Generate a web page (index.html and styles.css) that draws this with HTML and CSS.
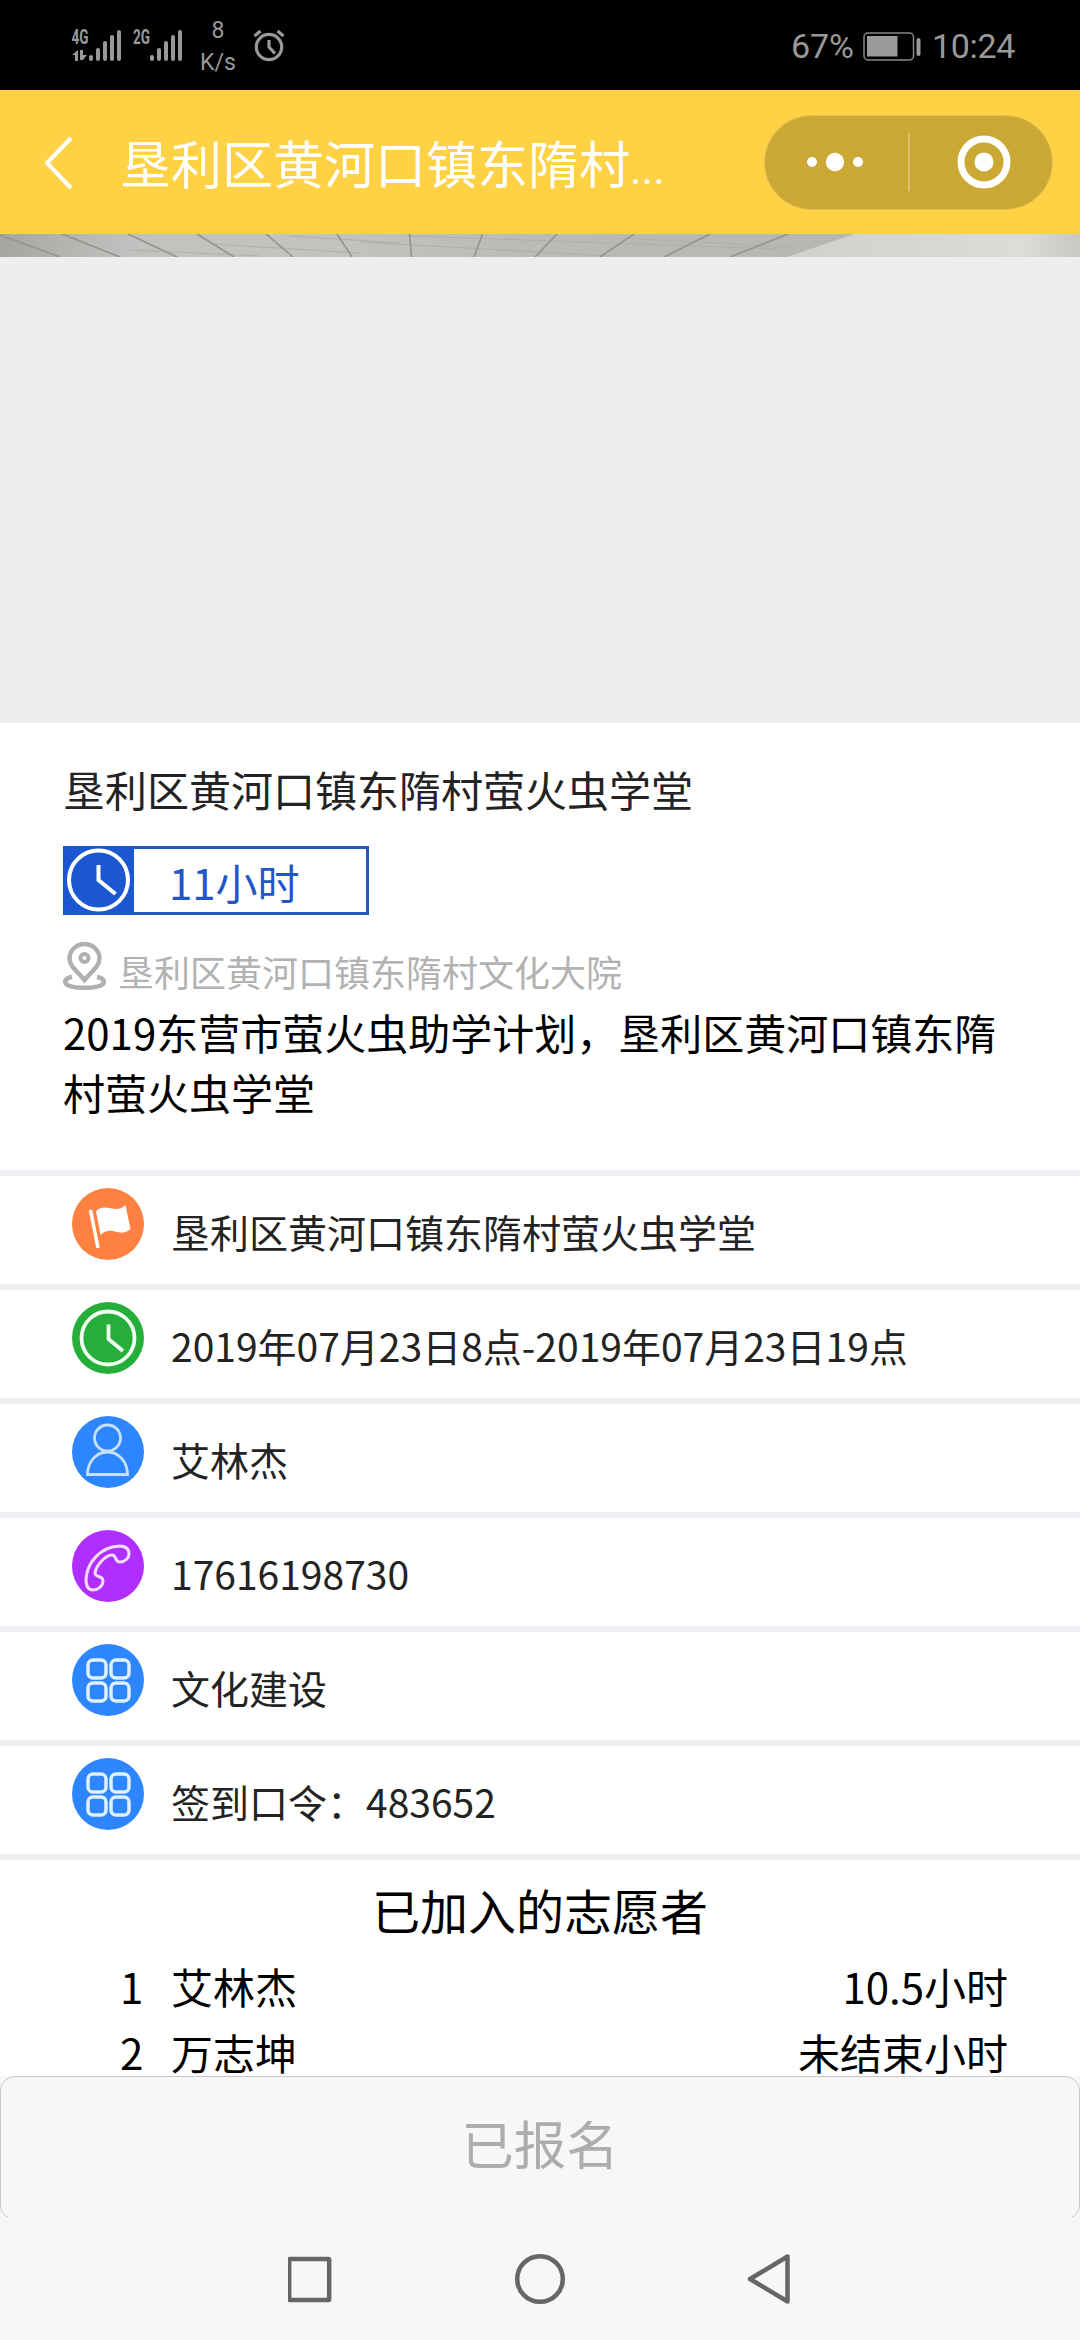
FILE: index.html
```html
<!DOCTYPE html>
<html lang="zh-CN">
  <head>
    <meta charset="UTF-8">
    <title>垦利区黄河口镇东隋村萤火虫学堂</title>
    <link rel="stylesheet" href="styles.css">
  </head>
  <body>
    <div class="status-bar">
      <svg class="signals" width="114" height="40" viewBox="70 23 114 40" fill="#999">
        <text class="net" x="71.500" y="44" textLength="17" lengthAdjust="spacingAndGlyphs">4G</text>
        <text class="net" x="133" y="44" textLength="17" lengthAdjust="spacingAndGlyphs">2G</text>
        <path d="M72 55l6-5v11h-3v-6zM80 50h3v5h4l-4 5h-3z"/>
        <rect x="89" y="55" width="4" height="6" rx="2"/>
        <rect x="96" y="48" width="4" height="13" rx="2"/>
        <rect x="103" y="41" width="4" height="20" rx="2"/>
        <rect x="110" y="35" width="4" height="26" rx="2"/>
        <rect x="117" y="30" width="4" height="31" rx="2"/>
        <rect x="150" y="55" width="4" height="6" rx="2"/>
        <rect x="157" y="48" width="4" height="13" rx="2"/>
        <rect x="164" y="41" width="4" height="20" rx="2"/>
        <rect x="171" y="35" width="4" height="26" rx="2"/>
        <rect x="178" y="30" width="4" height="31" rx="2"/>
      </svg>
      <div class="speed"><span>8</span><span>K/s</span></div>
      <svg class="alarm" width="32" height="34" viewBox="253 29 32 34" fill="none" stroke="#999" stroke-width="3.200">
        <circle cx="269" cy="47" r="12.700"/>
        <path d="M269 40v7l6 6.500M254.500 36l6-5M283.500 36l-6-5"/>
      </svg>
      <span class="percent">67%</span>
      <svg class="battery" width="60" height="30" viewBox="0 0 60 30">
        <rect x="1" y="1" width="49.500" height="27" rx="4" fill="none" stroke="#888" stroke-width="1.500"/>
        <rect x="4" y="4" width="30.500" height="20.500" fill="#999"/>
        <rect x="53.500" y="6" width="4" height="18" rx="2" fill="#999"/>
      </svg>
      <span class="time">10:24</span>
    </div>

    <div class="nav-bar">
      <svg class="back" width="30" height="54" viewBox="0 0 30 54" fill="none" stroke="#fff" stroke-width="4" stroke-linejoin="round">
        <path d="M27 2L3 27l24 25"/>
      </svg>
      <div class="nav-title">垦利区黄河口镇东隋村<span class="dots">...</span></div>
      <div class="capsule">
        <svg class="more" width="58" height="20" viewBox="0 0 58 20" fill="#fff">
          <circle cx="6" cy="10" r="5"/>
          <circle cx="29" cy="10" r="9.200"/>
          <circle cx="52" cy="10" r="5"/>
        </svg>
        <div class="capsule-line"></div>
        <svg class="target" width="54" height="54" viewBox="0 0 54 54">
          <circle cx="27" cy="27" r="23" fill="none" stroke="#fff" stroke-width="7"/>
          <circle cx="27" cy="27" r="9.500" fill="#fff"/>
        </svg>
      </div>
    </div>

    <svg class="banner" width="1080" height="23" viewBox="0 0 1080 23">
      <defs>
        <linearGradient id="ceiling">
          <stop offset="0" stop-color="#a4a6a2"/>
          <stop offset="0.120" stop-color="#bfc2be"/>
          <stop offset="0.300" stop-color="#c2c4bf"/>
          <stop offset="0.500" stop-color="#b9bbb5"/>
          <stop offset="0.800" stop-color="#b6b7b1"/>
        </linearGradient>
        <linearGradient id="wall">
          <stop offset="0" stop-color="#cfd1cb"/>
          <stop offset="0.800" stop-color="#dcdcd8"/>
          <stop offset="1" stop-color="#c8c7c4"/>
        </linearGradient>
      </defs>
      <rect width="1080" height="23" fill="url(#ceiling)"/>
      <path d="M130 16l130 6M210 10l150 9M290 2l110 7M360 8l250 14M410 2l370 13M620 4l170 9" fill="none" stroke="#aeb0aa"/>
      <path d="M0 1l60 22M62 0l58 23M128 0l49 23M197 0l37 23M266 0l27 23M337 0l15 23M409.500 0l2 23M482.500 0l-8.500 23M557 0l-22 23M634 0l-34 23M710 0l-46 23M788 0l-58 23" fill="none" stroke="#92948f" stroke-width="1.600"/>
      <path d="M854 0h226v23H787z" fill="url(#wall)"/>
    </svg>
    <div class="banner-blank"></div>

    <div class="intro">
      <div class="title">垦利区黄河口镇东隋村萤火虫学堂</div>
      <div class="hours">
        <svg width="71" height="69" viewBox="0 0 71 69" fill="none" stroke="#fff">
          <rect width="71" height="69" fill="#1b57d0" stroke="none"/>
          <circle cx="35.500" cy="34" r="29.500" stroke-width="4"/>
          <path d="M35.500 19v15l17 14" stroke-width="4"/>
        </svg>
        <span>11小时</span>
      </div>
      <div class="address">
        <svg width="43" height="48" viewBox="0 0 43 48" fill="none" stroke="#b0b0b0" stroke-width="4.500">
          <path d="M21.500 38C14 29 6.500 24 6.500 16.500a15 14.500 0 0 1 30 0C36.500 24 29 29 21.500 38z"/>
          <circle cx="21.500" cy="16" r="4" stroke-width="4"/>
          <path d="M9 35C3 36 1 39 3 42c5 5 32 5 37 0 2-3 0-6-6-7"/>
        </svg>
        <span>垦利区黄河口镇东隋村文化大院</span>
      </div>
      <div class="desc">2019东营市萤火虫助学计划，垦利区黄河口镇东隋村萤火虫学堂</div>
    </div>

    <div class="row">
      <svg class="icon" viewBox="0 0 72 72">
        <circle cx="36" cy="36" r="36" fill="#ff8142"/>
        <path d="M18.500 22l7.500 38" stroke="#fff" stroke-width="3.500"/>
        <path d="M24 23c10-9 19 4 29.500-6l5 24c-11 10-19-5-30 6z" fill="#fff"/>
      </svg>
      <span>垦利区黄河口镇东隋村萤火虫学堂</span>
    </div>
    <div class="row">
      <svg class="icon" viewBox="0 0 72 72" fill="none" stroke="#f0fff0" stroke-width="3.800">
        <circle cx="36" cy="36" r="36" fill="#25ae3a" stroke="none"/>
        <circle cx="36" cy="36" r="26.500"/>
        <path d="M36.500 22.500V37L51 49"/>
      </svg>
      <span>2019年07月23日8点-2019年07月23日19点</span>
    </div>
    <div class="row">
      <svg class="icon" viewBox="0 0 72 72" fill="none" stroke="#c4e2ff" stroke-width="2.800">
        <circle cx="36" cy="36" r="36" fill="#2e86ff" stroke="none"/>
        <circle cx="35.500" cy="22" r="13"/>
        <path d="M15.500 58.500C15.500 46 24 36 35.500 36s20 10 20 22.500z"/>
      </svg>
      <span>艾林杰</span>
    </div>
    <div class="row">
      <svg class="icon" viewBox="0 0 72 72" fill="none" stroke="#f4dcff" stroke-width="3">
        <circle cx="36" cy="36" r="36" fill="#b02eff" stroke="none"/>
        <path d="M14 49C15 33 28 17 47 16c7 0 10 3 10 8 0 4-4 8-9 8-6 0-3-7-8-7-6 0-16 10-17 18 0 5 8 2 8 8 0 5-5 9-10 9s-7-5-7-11z"/>
      </svg>
      <span>17616198730</span>
    </div>
    <div class="row">
      <svg class="icon" viewBox="0 0 72 72" fill="none" stroke="#dff0ff" stroke-width="3.500">
        <circle cx="36" cy="36" r="36" fill="#2e86ff" stroke="none"/>
        <rect x="16" y="16" width="18" height="18" rx="5"/>
        <rect x="39" y="16" width="18" height="18" rx="5"/>
        <rect x="16" y="39" width="18" height="18" rx="5"/>
        <rect x="39" y="39" width="18" height="18" rx="5"/>
      </svg>
      <span>文化建设</span>
    </div>
    <div class="row">
      <svg class="icon" viewBox="0 0 72 72" fill="none" stroke="#dff0ff" stroke-width="3.500">
        <circle cx="36" cy="36" r="36" fill="#2e86ff" stroke="none"/>
        <rect x="16" y="16" width="18" height="18" rx="5"/>
        <rect x="39" y="16" width="18" height="18" rx="5"/>
        <rect x="16" y="39" width="18" height="18" rx="5"/>
        <rect x="39" y="39" width="18" height="18" rx="5"/>
      </svg>
      <span>签到口令：483652</span>
    </div>

    <div class="members">
      <div class="members-title">已加入的志愿者</div>
      <div class="member"><span class="num">1</span><span>艾林杰</span><span class="worked">10.5小时</span></div>
      <div class="member"><span class="num">2</span><span>万志坤</span><span class="worked">未结束小时</span></div>
    </div>

    <div class="footer">
      <button class="join-btn" disabled>已报名</button>
    </div>
    <div class="system-nav">
      <svg width="504" height="52" viewBox="288 2253 504 52" fill="none" stroke="#666" stroke-width="4.500" stroke-linejoin="round">
        <rect x="289.200" y="2259" width="40" height="41" rx="1"/>
        <circle cx="540" cy="2279" r="22.800"/>
        <path d="M787.500 2256.500v45L750 2279z"/>
      </svg>
    </div>
  </body>
</html>
```

FILE: styles.css
```css
* {
  box-sizing: border-box;
}
body {
  margin: 0;
  width: 1080px;
  height: 2340px;
  overflow: hidden;
  display: flex;
  flex-direction: column;
  background: #fff;
  color: #000;
  font-family: "Noto Sans CJK SC", sans-serif;
  font-size: 42px;
}
body > * {
  flex-shrink: 0;
}
svg {
  display: block;
  flex-shrink: 0;
}

/* status bar */
.status-bar {
  display: flex;
  height: 90px;
  padding-left: 70px;
  background: #000;
  color: #999;
  font-family: Roboto, sans-serif;
}
.signals {
  margin-top: 23px;
  overflow: visible;
}
.net {
  font: bold 19.5px Roboto, sans-serif;
}
.speed {
  display: flex;
  flex-direction: column;
  align-items: center;
  width: 36px;
  margin: 15px 0 0 16px;
  font-size: 23px;
  line-height: 32px;
}
.alarm {
  margin: 29px 0 0 17px;
}
.percent,
.time {
  font-size: 34px;
  line-height: 93px;
}
.percent {
  margin-left: auto;
}
.battery {
  margin: 32px 0 0 9px;
}
.time {
  width: 148px;
  margin-left: 9px;
  letter-spacing: -0.3px;
}

/* mini program header */
.nav-bar {
  display: flex;
  align-items: center;
  height: 144px;
  padding: 0 27px 0 44px;
  background: #ffd145;
  color: #fff;
}
.back {
  margin-top: 2px;
}
.nav-title {
  margin-left: 46px;
  padding-top: 6px;
  font-size: 51px;
  line-height: 138px;
  white-space: nowrap;
}
.dots {
  font-family: Roboto, sans-serif;
  font-size: 44px;
}
.capsule {
  display: flex;
  align-items: center;
  width: 289px;
  height: 95px;
  margin-left: auto;
  padding-left: 41px;
  border: 1px solid #e3bf55;
  border-radius: 48px;
  background: #cba734;
}
.capsule-line {
  width: 2px;
  height: 58px;
  margin: 0 47px 0 44px;
  background: #dcc06b;
}

.banner-blank {
  height: 466px;
  background: #eee;
}

/* activity intro */
.intro {
  height: 447px;
  padding: 36px 63px 0;
}
.title {
  line-height: 60px;
  color: #232323;
}
.hours {
  display: flex;
  width: 306px;
  height: 69px;
  margin-top: 27px;
  color: #2057c4;
  box-shadow: inset 0 0 0 3px #2559b8;
}
.hours span {
  margin-left: 35px;
  line-height: 71px;
}
.address {
  display: flex;
  height: 63px;
  margin-top: 27px;
  color: #b2b2b2;
  font-size: 36px;
}
.address span {
  margin-left: 12px;
  line-height: 58px;
}
.desc {
  margin-top: -3px;
  line-height: 60px;
}

.row {
  display: flex;
  height: 114px;
  padding-left: 72px;
  border-top: 6px solid #efeff4;
  color: #232323;
  font-size: 39px;
  line-height: 110px;
}
.icon {
  width: 72px;
  height: 72px;
  margin: 12px 27px 0 0;
}

/* volunteers */
.members {
  height: 222px;
  border-top: 6px solid #efeff4;
}
.members-title {
  height: 93px;
  font-size: 48px;
  line-height: 98px;
  text-align: center;
}
.member {
  display: flex;
  height: 66px;
  padding: 0 72px 0 120px;
  line-height: 66px;
}
.num {
  width: 51px;
}
.worked {
  margin-left: auto;
}

.footer {
  height: 142px;
  overflow: hidden;
  background: #f7f7f7;
}
.join-btn {
  display: block;
  width: 1080px;
  height: 144px;
  padding: 0 0 12px;
  border: 1px solid #c6c6c6;
  border-radius: 15px;
  background: #f7f7f7;
  color: #adadad;
  font-family: inherit;
  font-size: 52.5px;
}
.system-nav {
  display: flex;
  justify-content: center;
  height: 122px;
  padding-top: 35px;
  background: #f7f7f7;
}
```
